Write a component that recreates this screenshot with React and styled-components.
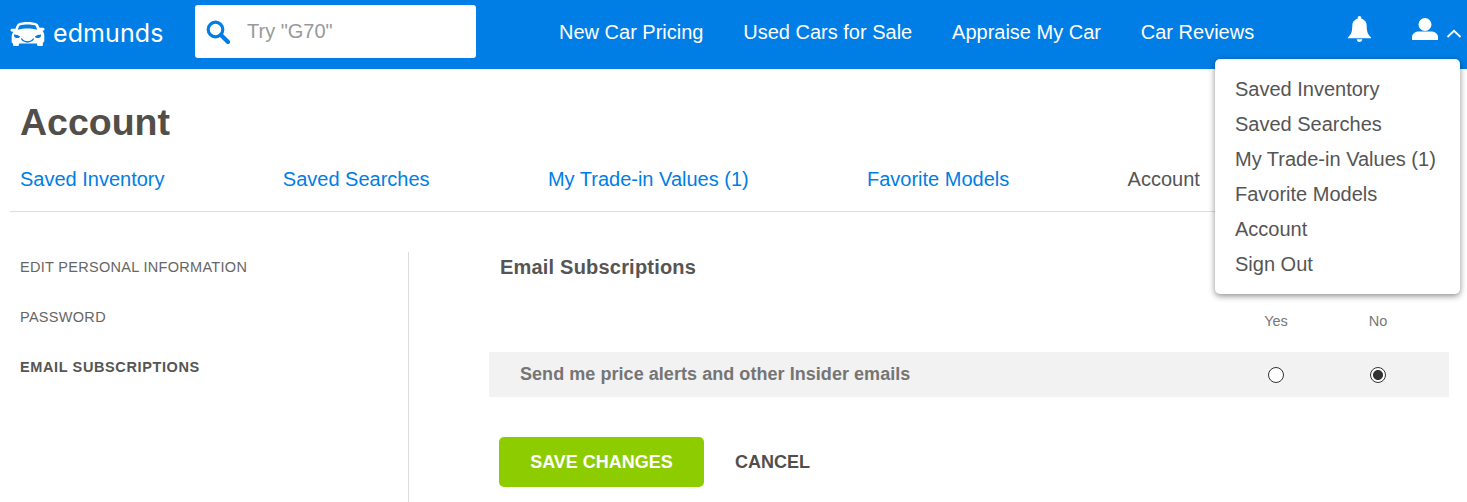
import React from 'react';
import styled, { createGlobalStyle } from 'styled-components';

const GlobalStyle = createGlobalStyle`
  html, body {
    margin: 0;
    padding: 0;
    background: #fff;
    font-family: "Liberation Sans", Arial, sans-serif;
    color: #555;
  }
  * { box-sizing: border-box; }
`;

const Page = styled.div`
  position: relative;
  width: 1467px;
  height: 502px;
  overflow: hidden;
`;

const Header = styled.header`
  display: flex;
  align-items: flex-start;
  height: 69px;
  background: #007ee5;
  color: #fff;
`;

const Logo = styled.a`
  display: flex;
  align-items: center;
  width: 195px;
  height: 67px;
  padding: 0 0 0 9px;
  color: #fff;
`;

const LogoText = styled.span`
  margin-left: 7px;
  font-family: "Inter", sans-serif;
  font-weight: 400;
  font-size: 25px;
  line-height: 1;
  letter-spacing: 0.1px;
`;

const Search = styled.div`
  display: flex;
  align-items: center;
  width: 281px;
  height: 53px;
  margin-top: 5px;
  padding-left: 11px;
  background: #fff;
  border-radius: 3px;
`;

const SearchText = styled.span`
  margin-left: 17px;
  margin-top: -1px;
  font-size: 20px;
  color: #999;
`;

const Nav = styled.nav`
  display: flex;
  gap: 39.8px;
  margin-left: 83px;
  height: 64px;
  align-items: center;
`;

const NavLink = styled.a`
  font-size: 20px;
  color: #fff;
`;

const Bell = styled.svg`
  position: absolute;
  left: 1347px;
  top: 16px;
`;

const User = styled.svg`
  position: absolute;
  left: 1412px;
  top: 18px;
`;

const Chevron = styled.svg`
  position: absolute;
  left: 1446px;
  top: 29px;
`;

const Menu = styled.ul`
  position: absolute;
  left: 1215px;
  top: 59px;
  width: 245px;
  height: 235px;
  margin: 0;
  padding: 13px 0 0 20px;
  list-style: none;
  background: #fff;
  border-radius: 5px;
  box-shadow: 0 2px 6px rgba(0, 0, 0, 0.45);
`;

const MenuItem = styled.li`
  height: 35px;
  line-height: 35px;
  font-size: 20px;
  color: #555;
`;

const Main = styled.main`
  padding: 0 10px;
`;

const Title = styled.h1`
  margin: 0;
  padding: 31px 0 0 10px;
  height: 94px;
  font-size: 37.5px;
  line-height: 44px;
  font-weight: 700;
  color: #524e4a;
`;

const Tabs = styled.div`
  display: flex;
  gap: 118.3px;
  height: 49px;
  padding: 4px 0 0 10px;
  border-bottom: 1px solid #ddd;
  font-size: 20px;
  line-height: 24px;
`;

const Tab = styled.a`
  color: ${(p) => (p.$active ? '#555' : '#007ee5')};
`;

const Body = styled.div`
  display: flex;
  margin-top: 40px;
  height: 250px;
`;

const Side = styled.aside`
  width: 399px;
  padding: 5px 0 0 10px;
  border-right: 1px solid #ddd;
`;

const SideLink = styled.a`
  display: block;
  height: 50px;
  font-size: 14.5px;
  line-height: 20px;
  letter-spacing: ${(p) => (p.$active ? '0.62px' : '0.3px')};
  color: ${(p) => (p.$active ? '#555' : '#666')};
  font-weight: ${(p) => (p.$active ? 700 : 400)};
`;

const Content = styled.section`
  width: 960px;
  margin-left: 80px;
`;

const Heading = styled.h2`
  margin: 0;
  height: 58px;
  padding: 4px 0 0 11px;
  font-size: 20px;
  line-height: 22px;
  letter-spacing: 0.2px;
  font-weight: 700;
  color: #555;
`;

const Columns = styled.div`
  display: flex;
  justify-content: flex-end;
  height: 42px;
  padding-top: 3px;
  padding-right: 20px;
`;

const Column = styled.span`
  width: 102px;
  text-align: center;
  font-size: 14.5px;
  line-height: 16px;
  color: #777;
`;

const Row = styled.div`
  display: flex;
  align-items: center;
  height: 45px;
  padding: 0 20px 0 31px;
  background: #f2f2f2;
`;

const RowLabel = styled.span`
  flex: 1;
  font-size: 18px;
  letter-spacing: 0.05px;
  font-weight: 700;
  color: #757575;
`;

const RadioCell = styled.span`
  display: flex;
  justify-content: center;
  width: 102px;
`;

const Radio = styled.input.attrs({ type: 'radio' })`
  appearance: none;
  width: 16px;
  height: 16px;
  margin: 0;
  border: 1px solid #333;
  border-radius: 50%;
  background: #fff;
  &:checked {
    background: radial-gradient(circle, #333 0 4.6px, #fff 5.4px);
  }
`;

const Actions = styled.div`
  display: flex;
  align-items: center;
  margin-top: 40px;
  padding-left: 10px;
`;

const SaveButton = styled.button`
  width: 205px;
  height: 50px;
  border: 0;
  border-radius: 5px;
  background: #8dcd00;
  color: #fff;
  font: 700 18px "Liberation Sans", Arial, sans-serif;
`;

const CancelButton = styled.button`
  margin-left: 31px;
  padding: 0;
  border: 0;
  background: none;
  color: #524e4a;
  font: 700 18px "Liberation Sans", Arial, sans-serif;
`;

const tabs = ['Saved Inventory', 'Saved Searches', 'My Trade-in Values (1)', 'Favorite Models'];
const navLinks = ['New Car Pricing', 'Used Cars for Sale', 'Appraise My Car', 'Car Reviews'];
const menuItems = [...tabs, 'Account', 'Sign Out'];
const sideLinks = ['Edit Personal Information', 'Password', 'Email Subscriptions'];

const CarIcon = () => (
  <svg width="37" height="24" viewBox="0 0 37 25">
    <path
      fill="#fff"
      fillRule="evenodd"
      d="M9 1.500C11 .6 15 0 18.500 0S26 .6 28 1.500c1.300.6 2.300 2.300 3 4.500h3.500c1 0 1.800.7 1.800 1.500s-.8 1.500-2.300 1.700c1.300 1.400 2 3 2 5v5c0 1-.5 1.800-1.500 2.300V24c0 .6-.5 1-1 1h-4c-.6 0-1-.4-1-1v-1.500H9.500V24c0 .6-.4 1-1 1h-4c-.5 0-1-.4-1-1v-1.500C2.500 22 2 21.200 2 20.200v-5c0-2 .7-3.600 2-5C1.500 10 .7 9.300.7 8.500S1.500 7 2.500 7H6c.7-2.700 1.700-4.800 3-5.500zM11 3.500C9.800 4 9 6 8.500 8c3-1 6.500-1.300 10-1.300s7 .3 10 1.300C28 6 27.200 4 26 3.500c-4-1.200-11-1.200-15 0zM4.500 13c-.4 1.800.4 3.300 2.300 3.700 2 .3 3.400-.2 4-1.500-1.600-1.500-3.800-2.200-6.300-2.200zM32.500 13c-2.500 0-4.700.7-6.300 2.200.6 1.300 2 1.800 4 1.500 1.900-.4 2.700-1.900 2.300-3.700zM11.500 17.500c1.300 2.600 4 4 7 4s5.700-1.400 7-4l-1.200-.5c-1.200 2-3.400 3-5.800 3s-4.600-1-5.800-3z"
    />
  </svg>
);

const SearchIcon = () => (
  <svg width="24" height="24" viewBox="0 0 24 24">
    <circle cx="9.500" cy="9.500" r="7.300" fill="none" stroke="#007ee5" strokeWidth="3.200" />
    <path d="M15 15l7 7" stroke="#007ee5" strokeWidth="4.200" strokeLinecap="round" />
  </svg>
);

export default function App() {
  return (
    <Page>
      <GlobalStyle />
      <Header>
        <Logo>
          <CarIcon />
          <LogoText>edmunds</LogoText>
        </Logo>
        <Search>
          <SearchIcon />
          <SearchText>Try "G70"</SearchText>
        </Search>
        <Nav>
          {navLinks.map((link) => (
            <NavLink key={link}>{link}</NavLink>
          ))}
        </Nav>
      </Header>
      <Bell width="25" height="26" viewBox="0 0 27 28">
        <path
          fill="#fff"
          d="M13.500 0c1.100 0 2 .9 2 2v.8c3.700.8 5.800 3.800 5.800 7.700 0 6.300 1.200 9.500 4.500 12.300.5.400.2 1.200-.5 1.200H1.700c-.7 0-1-.8-.5-1.200 3.300-2.800 4.500-6 4.500-12.300 0-3.900 2.100-6.900 5.800-7.700V2c0-1.100.9-2 2-2zM10.500 25h6c0 1.700-1.300 3-3 3s-3-1.300-3-3z"
        />
      </Bell>
      <User width="26" height="22" viewBox="0 0 26 22">
        <circle cx="13" cy="6.500" r="6.500" fill="#fff" />
        <path fill="#fff" d="M0 22v-3c0-3.500 3.500-5.500 7.500-5.500h11c4 0 7.500 2 7.500 5.500v3z" />
      </User>
      <Chevron width="16" height="10" viewBox="0 0 16 10">
        <path d="M1.500 8L8 1.800 14.500 8" fill="none" stroke="#fff" strokeWidth="1.800" />
      </Chevron>
      <Menu>
        {menuItems.map((item) => (
          <MenuItem key={item}>{item}</MenuItem>
        ))}
      </Menu>
      <Main>
        <Title>Account</Title>
        <Tabs>
          {tabs.map((tab) => (
            <Tab key={tab}>{tab}</Tab>
          ))}
          <Tab $active>Account</Tab>
        </Tabs>
        <Body>
          <Side>
            {sideLinks.map((link, i) => (
              <SideLink key={link} $active={i === 2}>
                {link.toUpperCase()}
              </SideLink>
            ))}
          </Side>
          <Content>
            <Heading>Email Subscriptions</Heading>
            <Columns>
              <Column>Yes</Column>
              <Column>No</Column>
            </Columns>
            <Row>
              <RowLabel>Send me price alerts and other Insider emails</RowLabel>
              <RadioCell>
                <Radio name="alerts" />
              </RadioCell>
              <RadioCell>
                <Radio name="alerts" defaultChecked />
              </RadioCell>
            </Row>
            <Actions>
              <SaveButton>SAVE CHANGES</SaveButton>
              <CancelButton>CANCEL</CancelButton>
            </Actions>
          </Content>
        </Body>
      </Main>
    </Page>
  );
}
